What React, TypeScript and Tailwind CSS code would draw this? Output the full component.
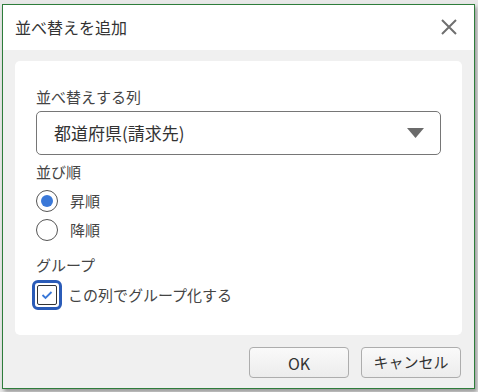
import React, { useState } from 'react';

const font = { fontFamily: '"Noto Sans CJK JP", "Noto Sans", sans-serif' };

const App: React.FC = () => {
  const [order, setOrder] = useState<'asc' | 'desc'>('asc');
  const [grouped, setGrouped] = useState(true);

  return (
    <div className="w-[478px] h-[392px] bg-[#e8e8e8] pt-[4px] pl-[2px]" style={font}>
      <div className="w-[473px] h-[385px] border border-[#2e7d3b] bg-[#f0f0f0] flex flex-col shadow-[2px_3px_4px_rgba(0,0,0,0.35)]">
        {/* Title bar */}
        <div className="h-[45px] bg-white flex items-center justify-between pl-[12px] pr-[16px] pb-[2px] shrink-0">
          <span className="text-[16px] text-[#333] leading-none">並べ替えを追加</span>
          <svg width="18" height="18" viewBox="0 0 18 18" className="text-[#6f6f6f]">
            <path d="M2 2 L16 16 M16 2 L2 16" stroke="currentColor" strokeWidth="2" />
          </svg>
        </div>

        {/* Body */}
        <div className="flex-1 flex flex-col px-[12px] pt-[11px]">
          <div className="h-[274px] bg-white rounded-[5px] pl-[21px] pr-[21px] pt-[26px] text-[#444]">
            <div className="text-[15px] leading-[20px]">並べ替えする列</div>
            <div className="mt-[4px] h-[44px] border border-[#767676] rounded-[5px] flex items-center justify-between pl-[17px] pr-[16px]">
              <span className="text-[17px] text-[#333]">都道府県(請求先)</span>
              <svg width="17" height="11" viewBox="0 0 17 11">
                <path d="M0 0 H17 L8.5 10 Z" fill="#6b6b6b" />
              </svg>
            </div>

            <div className="mt-[7px] text-[15px] leading-[20px]">並び順</div>
            <div className="mt-[8px] flex flex-col gap-[7px]">
              <label className="h-[22px] flex items-center gap-[12px] cursor-pointer" onClick={() => setOrder('asc')}>
                <span className="w-[22px] h-[22px] rounded-full border border-[#555] flex items-center justify-center">
                  {order === 'asc' && <span className="w-[12px] h-[12px] rounded-full bg-[#3a78d8]" />}
                </span>
                <span className="text-[15px] leading-[22px]">昇順</span>
              </label>
              <label className="h-[22px] flex items-center gap-[12px] cursor-pointer" onClick={() => setOrder('desc')}>
                <span className="w-[22px] h-[22px] rounded-full border border-[#555] flex items-center justify-center">
                  {order === 'desc' && <span className="w-[12px] h-[12px] rounded-full bg-[#3a78d8]" />}
                </span>
                <span className="text-[15px] leading-[22px]">降順</span>
              </label>
            </div>

            <div className="mt-[14px] text-[15px] leading-[20px]">グループ</div>
            <label className="mt-[5px] -ml-[4px] h-[30px] flex items-center gap-[6px] cursor-pointer" onClick={() => setGrouped(!grouped)}>
              <span className="w-[30px] h-[30px] rounded-[6px] border-[3px] border-[#2b5cb8] flex items-center justify-center">
                <span className="w-[20px] h-[20px] rounded-[2px] border border-[#333] flex items-center justify-center">
                  {grouped && (
                    <svg width="12" height="10" viewBox="0 0 12 10">
                      <path d="M1.5 5 L4.5 8 L10.5 2" stroke="#3a78d8" strokeWidth="1.8" fill="none" />
                    </svg>
                  )}
                </span>
              </span>
              <span className="text-[15px] leading-[22px]">この列でグループ化する</span>
            </label>
          </div>

          {/* Buttons */}
          <div className="flex justify-end gap-[12px] mt-[12px] pr-[1px]">
            <button className="w-[100px] h-[31px] rounded-[4px] border border-[#adadad] bg-gradient-to-b from-[#fafafa] to-[#ececec] text-[16px] text-[#333]">
              OK
            </button>
            <button className="w-[100px] h-[31px] rounded-[4px] border border-[#adadad] bg-gradient-to-b from-[#fafafa] to-[#ececec] text-[15px] text-[#333]">
              キャンセル
            </button>
          </div>
        </div>
      </div>
    </div>
  );
};

export default App;
